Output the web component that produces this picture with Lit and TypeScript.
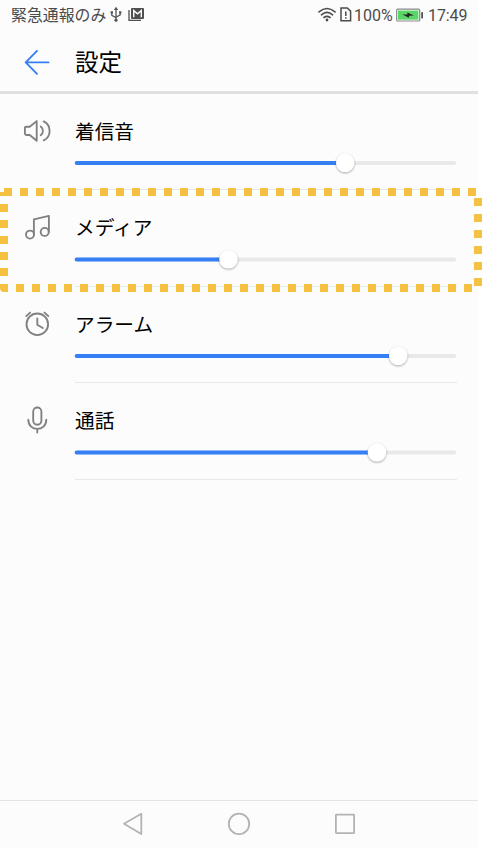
import { LitElement, html, svg, css } from "lit";
import { customElement, property } from "lit/decorators.js";

const glyphs: Record<string, unknown> = {
  ringtone: svg`<path d="M13.7 7.1V26.7L6.7 21H3.5Q1.9 21 1.9 19.5V14.2Q1.9 12.7 3.5 12.7H6.7Z"/>
      <path d="M17.7 12.6A5.3 5.3 0 0 1 17.7 21.2"/><path d="M20.7 7.4A10.6 10.6 0 0 1 20.7 26.4"/>`,
  media: svg`<circle cx="7" cy="24.6" r="4"/><circle cx="21.7" cy="21.9" r="4"/>
      <path d="M10.9 24.3V9.3L25.9 5.9V21.9"/>`,
  alarm: svg`<circle cx="14.3" cy="17.3" r="10.8"/><path d="M14.3 11.4V17.8L19.8 21"/>
      <path d="M3.3 9.2L7.1 5.6M21.5 5.6L25.3 9.2"/>`,
  call: svg`<rect x="10.2" y="4.5" width="8.2" height="17.2" rx="4.1"/>
      <path d="M5.3 16.7C5.3 29 23.3 29 23.3 16.7M14.3 25.9V29.6"/>`,
};

@customElement("volume-row")
export class VolumeRow extends LitElement {
  @property() label = "";
  @property() icon = "";
  @property({ type: Number }) thumb = 0;
  @property({ type: Number }) track = 69;

  static styles = css`
    :host { display: grid; grid-template-columns: 52px 382px; padding-left: 23px; box-sizing: border-box; }
    .icon { width: 29px; height: 34px; margin-top: 20px; fill: none; stroke: #808080; stroke-width: 1.85;
      stroke-linecap: round; stroke-linejoin: round; }
    .content { display: flex; flex-direction: column; border-bottom: 1px solid #e8e8e8; box-sizing: border-box; }
    .label { height: 54px; box-sizing: border-box; padding-top: 24px; line-height: 30px; font-size: 19.7px; color: #000; white-space: nowrap; }
    .slider { width: 382px; height: 38px; overflow: visible; display: block; }
    .rest { fill: #e9e9e9; }
    .filled { fill: #347ff4; }
    .thumb { fill: #fff; filter: drop-shadow(0 1px 1.2px rgba(0, 0, 0, 0.32)); }
  `;

  render() {
    const y = this.track - 54;
    return html`
      <svg class="icon" viewBox="0 0 29 34">${glyphs[this.icon]}</svg>
      <div class="content">
        <div class="label">${this.label}</div>
        <svg class="slider" viewBox="0 0 382 38">
          <rect class="rest" x="0" y=${y - 2} width="381.3" height="4" rx="2" />
          <rect class="filled" x="-0.3" y=${y - 2} width=${this.thumb} height="4" rx="2" />
          <circle class="thumb" cx=${this.thumb} cy=${y - 0.2} r="9.3" />
        </svg>
      </div>
    `;
  }
}

@customElement("app-root")
export class AppRoot extends LitElement {
  static styles = css`
    :host { display: block; width: 488px; height: 854px; overflow: hidden; background: #fff;
      font-family: Roboto, "Noto Sans CJK JP", sans-serif; }
    .screen { position: relative; width: 478px; height: 848px; background: #fcfcfc; display: flex; flex-direction: column; }
    .status { height: 30px; display: flex; align-items: center; padding: 0 11px; font-size: 16px; color: #4b4b4b; white-space: nowrap; box-sizing: border-box; }
    .status svg { flex: none; display: block; }
    .carrier { width: 98px; line-height: 29px; font-size: 15.9px; }
    .mail, .sim { margin-left: 4px; }
    .gap { flex: 1; }
    .percent { width: 42px; margin-left: 2px; }
    .time { margin-left: 4px; width: 39px; letter-spacing: -0.1px; }
    .header { height: 64px; box-sizing: border-box; border-bottom: 3px solid #e0e0e0; display: flex; align-items: center; padding: 5px 0 0 23px; }
    .back { width: 28px; height: 28px; margin-right: 24px; fill: none; stroke: #347ff4; stroke-width: 1.9; stroke-linecap: round; stroke-linejoin: round; }
    h1 { margin: 0; font-size: 23.5px; line-height: 34px; font-weight: 400; color: #000; }
    .rows { display: grid; grid-template-rows: 96px 97px 96px 97px; flex: 1; align-content: start; }
    .nav { height: 48px; box-sizing: border-box; border-top: 1px solid #e4e4e4; }
    .nav svg { display: block; fill: none; stroke: #b3b3b3; stroke-width: 1.8; stroke-linejoin: round; }
    .highlight { position: absolute; left: 0; top: 188px; width: 482px; height: 104px; fill: #f6c042; }
  `;

  render() {
    const across = Array.from({ length: 30 }, (_, i) => i * 16);
    const down = Array.from({ length: 6 }, (_, i) => i * 16);
    return html`
      <div class="screen">
        <div class="status">
          <span class="carrier">緊急通報のみ</span>
          <svg width="14" height="18" viewBox="0 0 14 18" fill="none" stroke="#555" stroke-width="1.3">
            <path d="M7 3V14M2.8 7V9.3L7 11.8M11.2 7V8.8L7 11.2" />
            <path d="M7 .8L9.2 4H4.8ZM1.6 5.2H4V7.6H1.6ZM10 5.2H12.4V7.6H10Z" fill="#555" stroke="none" />
            <circle cx="7" cy="14.2" r="1.6" fill="#555" stroke="none" />
          </svg>
          <svg class="mail" width="18" height="18" viewBox="0 0 18 18">
            <path d="M2 4V14.4H14" fill="none" stroke="#505050" stroke-width="1.3" />
            <rect x="4" y="2" width="13" height="11" rx="1" fill="#505050" />
            <path d="M6.7 11.2V4.6L10.5 7.8L14.3 4.6V11.2" fill="none" stroke="#fcfcfc" stroke-width="1.4" />
          </svg>
          <span class="gap"></span>
          <svg width="18" height="18" viewBox="0 0 18 18" fill="none" stroke="#4b4b4b" stroke-width="1.6" stroke-linecap="round">
            <path d="M1 5.9Q9 -0.9 17 5.9M3.4 8.8Q9 4.1 14.6 8.8M6 11.5Q9 9.2 12 11.5" />
            <circle cx="9" cy="14" r="1.4" fill="#4b4b4b" stroke="none" />
          </svg>
          <svg class="sim" width="12" height="18" viewBox="0 0 12 18" fill="none" stroke="#4b4b4b" stroke-width="1.5">
            <path d="M1 1.9H7.2L10.6 5.1V14.8H1ZM5.8 5.4V10M5.8 11.3V12.8" />
          </svg>
          <span class="percent">100%</span>
          <svg width="28" height="14" viewBox="0 0 28 14">
            <rect x="0.7" y="1.2" width="23" height="11.8" rx="1" fill="#fff" stroke="#888" stroke-width="1.2" />
            <rect x="2" y="2.5" width="20.4" height="9.2" fill="#5bd468" />
            <path d="M6.4 6.5L11.5 6.4L11.2 4.4L18 7.4L13 7.8L13.1 9.8Z" fill="#222" />
            <rect x="25.2" y="4" width="1.8" height="6.4" rx=".6" fill="#555" />
          </svg>
          <span class="time">17:49</span>
        </div>
        <div class="header">
          <svg class="back" viewBox="0 0 28 28"><path d="M25.5 13.4H2.7M14 1.9L2.7 13.4L14 24.8" /></svg>
          <h1>設定</h1>
        </div>
        <div class="rows">
          <volume-row label="着信音" icon="ringtone" thumb="270.2" track="69"></volume-row>
          <volume-row label="メディア" icon="media" thumb="153.5" track="69.5"></volume-row>
          <volume-row label="アラーム" icon="alarm" thumb="323.2" track="69"></volume-row>
          <volume-row label="通話" icon="call" thumb="302" track="69.5"></volume-row>
        </div>
        <div class="nav">
          <svg width="478" height="47" viewBox="0 0 478 47">
            <path d="M124 22.8L141.3 12.8V33Z" /><circle cx="239" cy="22.9" r="10.2" />
            <rect x="335.9" y="13.7" width="18.2" height="18.4" rx=".5" />
          </svg>
        </div>
        <svg class="highlight" viewBox="0 0 482 104">
          ${across.map((x) => svg`<rect x=${x + 4} y="0" width="8" height="8"/>`)}
          <rect x="0" y="4" width="4" height="4" />
          ${down.slice(0, 5).map((y) => svg`<rect x="0" y=${y + 16} width="8" height="8"/>`)}
          ${down.map((y) => svg`<rect x="474" y=${y + 10} width="8" height="8"/>`)}
          <path d="M0 96H8V104H4Q0 104 0 100Z" />
          ${across.slice(1).map((x) => svg`<rect x=${x} y="96" width="8" height="8"/>`)}
        </svg>
      </div>
    `;
  }
}
